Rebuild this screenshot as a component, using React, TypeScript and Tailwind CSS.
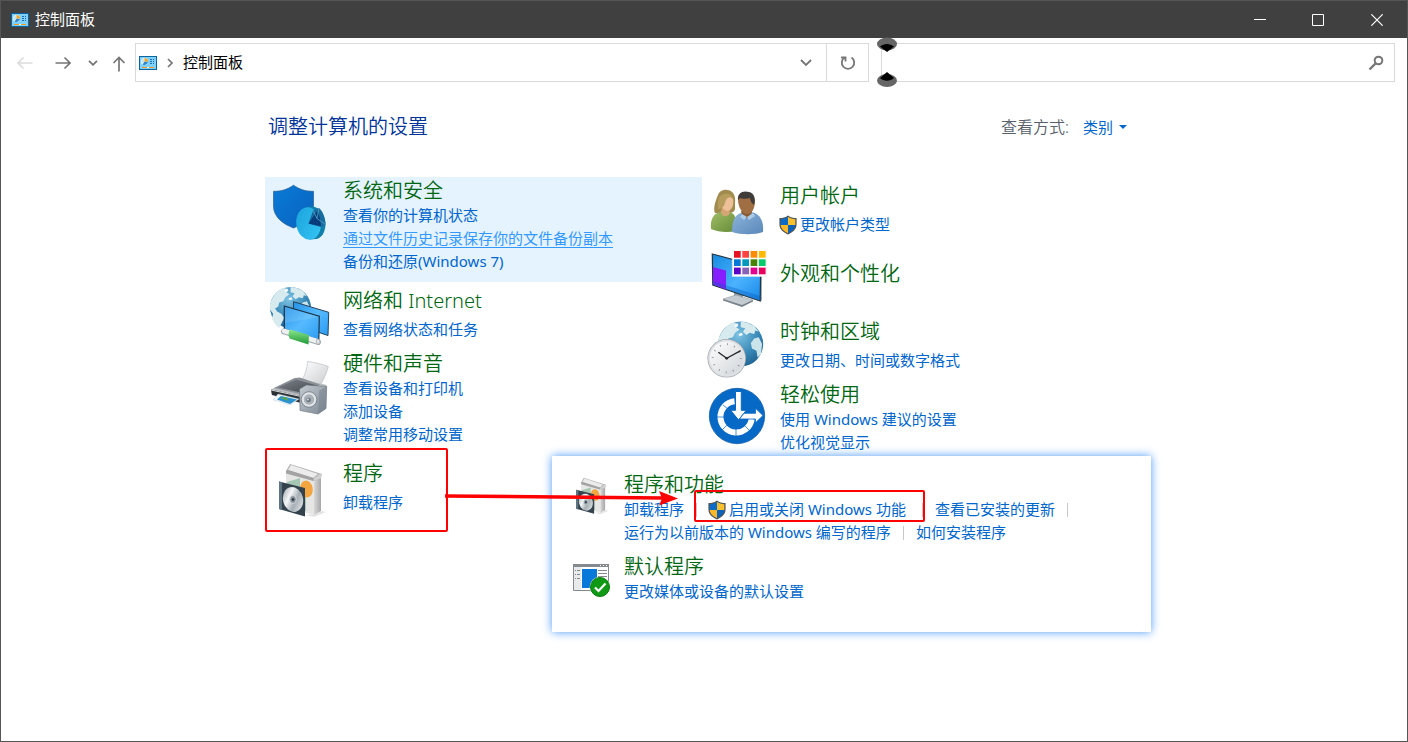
import type { ReactNode } from "react";

interface CategoryProps {
  icon: ReactNode;
  title: string;
  children?: ReactNode;
  className?: string;
  compact?: boolean;
  highlighted?: boolean;
}

interface TaskLinkProps {
  children: ReactNode;
  active?: boolean;
  shield?: boolean;
}

const swatches = [
  ["#e81123", "#ff4343", "#ff8c00", "#ffb900"],
  ["#0078d7", "#0099bc", "#498205", "#00cc6a"],
  ["#5a00c8", "#8764b8", "#e3008c", "#ea005e"],
];

function PanelIcon() {
  return (
    <svg viewBox="0 0 18 14" className="h-[14px] w-[18px] shrink-0">
      <rect width="18" height="14" fill="#0a64a0" />
      <rect x="1" y="1" width="16" height="12" fill="#7fd0fb" />
      <circle cx="5.5" cy="5.5" r="3.5" fill="#fff" />
      <path d="M5.5 5.5V2.400A3.100 3.100 0 0 0 3 7.500Z" fill="#bfe4fa" />
      <path d="M5.500 5.500H9A3.500 3.500 0 0 1 3.500 8.400Z" fill="#2c8ad4" />
      <path d="M5.500 5.500V2A3.500 3.500 0 0 1 9 5.500Z" fill="#f5a623" />
      <path
        d="M11 3h2v1h-2zM14 3h1v1h-1zM11 5h2v1h-2zM14 5h1v1h-1zM11 7h2v1h-2zM14 7h1v1h-1z"
        fill="#1b6fae"
      />
      <path d="M3 11h5v1H3zM10 11h5v1h-5z" fill="#f59a1c" />
      <path d="M8 11h2v1H8z" fill="#fff" />
    </svg>
  );
}

function UacShield() {
  return (
    <svg viewBox="0 0 18 20" className="mr-[3px] -ml-px h-5 w-[18px] shrink-0">
      <path d="M9 .5C6.5 2.4 3.8 3 .4 3v6.500c0 5 4.300 8 8.600 10 4.300-2 8.600-5 8.600-10V3C14.200 3 11.500 2.400 9 .5Z" fill="#50575d" />
      <path d="M9 2C7 3.300 4.800 4 1.700 4.200V10H9Z" fill="#0b6bc7" />
      <path d="M9 2c2 1.300 4.200 2 7.300 2.200V10H9Z" fill="#fbc02d" />
      <path d="M1.700 10c.3 4 3.800 6.500 7.300 8.200V10Z" fill="#fdb827" />
      <path d="M16.300 10c-.3 4-3.800 6.500-7.300 8.200V10Z" fill="#0b62b8" />
    </svg>
  );
}

function SecurityIcon() {
  return (
    <svg viewBox="0 0 64 64" className="size-16">
      <defs>
        <linearGradient id="shield" x1="0" y1="0" x2="1" y2="1">
          <stop offset="0" stopColor="#0a7ad8" />
          <stop offset="1" stopColor="#0862bd" />
        </linearGradient>
        <linearGradient id="pie" x1="0" y1="0" x2="1" y2="1">
          <stop offset="0" stopColor="#1ba3dc" />
          <stop offset="1" stopColor="#35c5f4" />
        </linearGradient>
      </defs>
      <path d="M26.500 4.200C21 8.300 14 10.500 6.500 10.300V25c0 11 9.500 18 20 22 10.500-4 20-11 20-22V10.300C39 10.500 32 8.300 26.500 4.200Z" fill="url(#shield)" stroke="#2c5d8c" strokeWidth=".7" />
      <path d="M38 26.500 45 25.500C53 26 58.500 34 58.500 43c0 8-4 14-9 15l-7 .5Z" fill="#127fab" />
      <ellipse cx="41.500" cy="42.500" rx="12.200" ry="16.300" transform="rotate(-9 41.500 42.500)" fill="url(#pie)" />
      <path d="M41.500 42.500 46 29.500l6-2.500c3.500 3 6 9 6.500 17l-5 2Z" fill="#176b9d" />
      <path d="m41.500 42.500 8.500-12.300c2.500 4 3.800 9 3.800 15Z" fill="#063c7c" />
      <path d="m46 29.500 4 8 8.500 6M50 37.500l2-10.500" fill="none" stroke="#54a7c9" strokeWidth=".8" />
    </svg>
  );
}

function Globe({ cx, cy, r }: { cx: number; cy: number; r: number }) {
  return (
    <g transform={`translate(${cx} ${cy}) scale(${r / 20})`}>
      <defs>
        <radialGradient id="ocean" cx=".45" cy=".3" r=".75">
          <stop offset="0" stopColor="#7cc2e3" />
          <stop offset=".6" stopColor="#3787b6" />
          <stop offset="1" stopColor="#1c5f8d" />
        </radialGradient>
      </defs>
      <circle r="20" fill="url(#ocean)" />
      <path d="M-18-8c2-5 6-9 11-11l5 1-2 3 3 2-4 3-2 4-4 1-1 4-3 2 2 3 4 2 3 4-2 4-3 6c-3-2-5-5-7-9l1-5-3-4c-.5-4 0-7 2-10Z" fill="#d7ebef" />
      <path d="m0-20 6 1 6 3 4 5-3-1-1 3-4-1-3 2-3-3 2-3-4-1Z" fill="#d7ebef" />
      <path d="m12-5 4-1 3 6-1 9-3 3-1-6-4-2-1-5Z" fill="#cbe4ea" />
      <path d="m-6-17 3-1 1 2-3 1ZM-2-9l3-1 1 2-3 1Z" fill="#f2fafa" />
    </g>
  );
}

function NetworkIcon() {
  return (
    <svg viewBox="0 0 64 64" className="size-16">
      <defs>
        <linearGradient id="net" x1="0" y1="0" x2="1" y2="1">
          <stop offset="0" stopColor="#2492e8" />
          <stop offset=".5" stopColor="#56baff" />
          <stop offset="1" stopColor="#2a9af2" />
        </linearGradient>
        <linearGradient id="cable" x1="0" y1="0" x2="0" y2="1">
          <stop offset="0" stopColor="#8be58b" />
          <stop offset="1" stopColor="#1f9a38" />
        </linearGradient>
      </defs>
      <Globe cx={23.5} cy={21.5} r={20.5} />
      <path d="m26.500 15.700 35.200 10.600L61 49.500 26.500 38Z" fill="url(#net)" stroke="#25435a" strokeWidth="1" />
      <path d="m17.300 20 35 10.200-.5 25L17.300 43Z" fill="url(#net)" stroke="#1d3548" strokeWidth="1.2" />
      <path d="m18 21 33.500 10L18 37Z" fill="#fff" opacity=".12" />
      <path d="m35 49 5 1.500-.5 4-5-1Z" fill="#bfc6cb" />
      <path d="m17 45.500 34 10.500" stroke="#9ea7ad" strokeWidth="6" strokeLinecap="round" />
      <path d="m17 45 34 10.500" stroke="#eef1f2" strokeWidth="4.5" strokeLinecap="round" />
      <path d="m23 43.500 19 5.500-.5 9.500-19-6c-1.500-3-1-7 .5-9Z" fill="url(#cable)" />
      <ellipse cx="51" cy="55.700" rx="1.8" ry="2.6" fill="#dfe3e5" stroke="#929a9f" strokeWidth=".6" />
    </svg>
  );
}

function HardwareIcon() {
  return (
    <svg viewBox="0 0 64 64" className="size-16">
      <defs>
        <linearGradient id="paper" x1="0" y1="0" x2="1" y2="1">
          <stop offset="0" stopColor="#fff" />
          <stop offset="1" stopColor="#c9cccf" />
        </linearGradient>
        <linearGradient id="printer" x1="0" y1="0" x2="1" y2="1">
          <stop offset="0" stopColor="#7d8388" />
          <stop offset="1" stopColor="#42484d" />
        </linearGradient>
        <linearGradient id="speaker" x1="0" y1="0" x2="1" y2="1">
          <stop offset="0" stopColor="#c4cad1" />
          <stop offset="1" stopColor="#7d8893" />
        </linearGradient>
      </defs>
      <path d="M40.700 6.500c7 1 14 2.500 20.600 5-2 8-5 13-8 19L35 25c3-5 5-11 5.700-18.500Z" fill="url(#paper)" stroke="#b4b7ba" strokeWidth=".6" />
      <path d="m4 34.500 24-11.800L59.700 30 58 36l-25 9L4.500 39Z" fill="#b9bdc0" />
      <path d="m7 33 21-10 5-.5 20 7-18 10Z" fill="#8b9196" />
      <path d="m11 32.500 18-8 21 6-16 7Z" fill="url(#printer)" />
      <path d="m4 34.500 30 6.500v7L5 40Z" fill="#2b3135" />
      <path d="m4 34.500 30 6.500v1L4 35.500Z" fill="#d9dcde" />
      <path d="m11 39 21 5-9 6c-5-1-10-4-17-5Z" fill="#f1f6f8" stroke="#aebdc5" strokeWidth=".4" />
      <path d="m14 41 16 3.500-7 4.500c-4-1-8-3-13-4.500Z" fill="#2b91cf" />
      <path d="m13 43 6-1 3 4Z" fill="#59a84b" />
      <path d="m32.500 34 7-4 20.200 1.500L59 53.500 51 59l-18-3.500Z" fill="url(#speaker)" stroke="#68727b" strokeWidth=".6" />
      <path d="m52 36 7.500-4.500L59 53.500 51 59Z" fill="#75808a" opacity=".5" />
      <circle cx="42" cy="44.500" r="7.800" fill="#dce0e4" stroke="#6e7881" strokeWidth=".8" />
      <circle cx="42" cy="44.500" r="5.700" fill="#aab2b9" stroke="#f2f4f5" strokeWidth=".8" />
      <circle cx="41.500" cy="45" r="2.300" fill="#6a747d" />
      <circle cx="41" cy="44.500" r=".9" fill="#e6e9eb" />
    </svg>
  );
}

function ProgramsIcon({ className }: { className: string }) {
  return (
    <svg viewBox="0 0 64 64" className={className}>
      <defs>
        <linearGradient id="boxSide" x1="0" y1="0" x2="1" y2="0">
          <stop offset="0" stopColor="#d8d8d8" />
          <stop offset="1" stopColor="#a7a7a7" />
        </linearGradient>
        <linearGradient id="disc" x1="0" y1="0" x2="1" y2="1">
          <stop offset="0" stopColor="#8f989e" />
          <stop offset=".35" stopColor="#f4f6f7" />
          <stop offset=".6" stopColor="#a6afb5" />
          <stop offset="1" stopColor="#f1f3f4" />
        </linearGradient>
      </defs>
      <path d="m38 55 9-1 8-3 4 1-12 5Z" fill="#000" opacity=".1" />
      <path d="m19 11 28 8v36l-28-8Z" fill="#e6e6e5" />
      <path d="m47 19 7-3v35l-7 4Z" fill="url(#boxSide)" />
      <path d="m19 11 4-7 32 10-1 4-7 3Z" fill="#b5b5b5" />
      <path d="m21 10 3-5 27 9-5 4Z" fill="#ececec" />
      <path d="m19 11 2-1 25.500 8v3L19 13.500Z" fill="#a3a3a3" />
      <path d="M47 18c3-1 5-3 7-5l1 2-1 3-7 3Z" fill="#d2d2d2" />
      <path d="m20 22 13-4v20H20Z" fill="#a6c7b4" />
      <path d="m33 35 6 1v15h-6Z" fill="#a9c7b8" />
      <ellipse cx="39.500" cy="29" rx="6.200" ry="8.500" transform="rotate(-10 39.500 29)" fill="#f3a63f" />
      <path d="m12 21.500 26 6.500v28.500L12 49Z" fill="#34424e" />
      <path d="m12 21.500 3 .8V50l-3-1Z" fill="#5e7481" />
      <ellipse cx="26" cy="39.500" rx="10" ry="12.500" transform="rotate(-14 26 39.500)" fill="url(#disc)" />
      <ellipse cx="26" cy="39.500" rx="3.300" ry="4" fill="#87929a" stroke="#e9edef" strokeWidth=".7" />
      <circle cx="26" cy="39.500" r="1.300" fill="#27333d" />
    </svg>
  );
}

function AccountsIcon() {
  return (
    <svg viewBox="0 0 64 64" className="size-16">
      <defs>
        <linearGradient id="green" x1="0" y1="0" x2="1" y2="1">
          <stop offset="0" stopColor="#a1bd65" />
          <stop offset="1" stopColor="#658b39" />
        </linearGradient>
        <linearGradient id="blue" x1="0" y1="0" x2="1" y2="1">
          <stop offset="0" stopColor="#8db4da" />
          <stop offset="1" stopColor="#5a88bb" />
        </linearGradient>
      </defs>
      <path d="M14 14c2-6 11-7 15-2 3 4 2 9 2 13 1 6-3 7-6 7H11c-2-4 0-11 3-18Z" fill="#a28b4f" />
      <path d="M7 48c-1-9 2-16 10-17h8c5 1 7 5 7 10v9c-9 2-18 1-25-2Z" fill="url(#green)" />
      <path d="M17 31c1 5 6 6 9 1l-2-6h-6Z" fill="#d5a575" />
      <path d="M20 15c3-1 7 0 9 3 1 6-1 11-5 12-4 0-7-4-6-9Z" fill="#edc099" />
      <path d="M14 22c0-10 11-12 15-5-4-2-7 0-8 5-1 4-4 6-7 6Z" fill="#b79d5d" />
      <path d="M28 51c0-10 2-17 9-19l11-1c8 2 12 9 11 20-8 3-22 3-31 0Z" fill="url(#blue)" />
      <path d="M37 30h11l-1 5c-3 3-7 3-9-1Z" fill="#885a35" />
      <path d="M34 18c0-6 17-6 17 2 0 7-3 13-8 13s-9-7-9-15Z" fill="#a06e43" />
      <path d="M34 19c-1-7 5-10 11-8 5 1 7 6 5 13l-3-3-1-4c-4 1-8 1-10 0Z" fill="#3e3b39" />
      <path d="m38 33 5 3 6-4 2 3-6 4-2-3-3 3-4-3Z" fill="#abcbe9" />
    </svg>
  );
}

function AppearanceIcon() {
  return (
    <svg viewBox="0 0 64 64" className="size-16">
      <defs>
        <linearGradient id="screen" x1="0" y1="0" x2="1" y2="1">
          <stop offset="0" stopColor="#168be0" />
          <stop offset=".55" stopColor="#4bb2ff" />
          <stop offset="1" stopColor="#1788e6" />
        </linearGradient>
      </defs>
      <path d="m30 41 9 3v7l-9-2Z" fill="#929ea8" />
      <path d="m19 49 13-4 17 5-11 6Z" fill="#c4ccd2" stroke="#87929a" strokeWidth=".5" />
      <path d="m19 49 19 6 11-5v1.500L38 57l-19-6.500Z" fill="#77828b" />
      <path d="m56.500 17 1.500.5v33l-2 1Z" fill="#a1abb2" />
      <path d="m8.300 4 48.400 13-.5 34L8.800 35Z" fill="url(#screen)" stroke="#213645" strokeWidth="1.2" />
      <path d="m9 17 13 3.500v19L9 34.500Z" fill="#861ffd" />
      <path d="m9 31 47 15v4L9 34.500Z" fill="#0755bd" opacity=".35" />
      <path d="M28.300 0h34.300v26.500H28.300Z" fill="#fff" stroke="#e4e7e9" strokeWidth=".5" />
      {swatches.map((row, y) =>
        row.map((color, x) => (
          <rect key={color} x={30 + x * 8.3} y={1 + y * 8.3} width="6.700" height="6.700" fill={color} />
        ))
      )}
    </svg>
  );
}

function ClockIcon() {
  return (
    <svg viewBox="0 0 64 64" className="size-16">
      <defs>
        <linearGradient id="clock" x1="0" y1="0" x2="1" y2="1">
          <stop offset="0" stopColor="#fff" />
          <stop offset="1" stopColor="#d0d4d8" />
        </linearGradient>
      </defs>
      <Globe cx={36.7} cy={27} r={22.5} />
      <circle cx="22.700" cy="41.300" r="19.300" fill="#a6abb0" />
      <circle cx="22.700" cy="41.300" r="18.500" fill="#dfe2e5" />
      <circle cx="22.700" cy="41.300" r="16.700" fill="url(#clock)" />
      <circle cx="22.700" cy="41.300" r="14" fill="none" stroke="#858b91" strokeWidth="2" strokeDasharray=".8 6.530" />
      <path d="m14.300 35.300 8.400 6 14-7.600" fill="none" stroke="#25292d" strokeWidth="1.4" />
      <circle cx="22.700" cy="41.300" r="1.400" fill="#25292d" />
    </svg>
  );
}

function EaseIcon() {
  return (
    <svg viewBox="0 0 64 64" className="size-16">
      <circle cx="33" cy="30" r="27.700" fill="#0769c6" stroke="#0755a0" strokeWidth=".7" />
      <path d="M30.500 15.200A15.700 15.700 0 1 0 47.700 33" fill="none" stroke="#fff" strokeWidth="6" />
      <path d="m19 19 5 4M13 31h7M18 44l5-5M32 43v7M41 40l5 5" stroke="#0769c6" strokeWidth=".7" />
      <path d="M31.500 5.500h5.800v18.800h5L34.500 34l-7.800-9.700h4.800Z" fill="#fff" stroke="#0769c6" strokeWidth="1" />
      <path d="m35.500 33 4.500-5.700h11.500v-5l7.500 7.200-7.500 7.200V33Z" fill="#fff" stroke="#0769c6" strokeWidth=".8" />
    </svg>
  );
}

function DefaultsIcon() {
  return (
    <svg viewBox="0 0 44 44" className="size-11">
      <path d="M5.500 7.500h35v26h-35Z" fill="#fff" stroke="#858a8e" />
      <path d="M5 7h36v3H5Z" fill="#858a8e" />
      <path d="M32 8h1v1h-1zM35 8h1v1h-1zM38 8h1v1h-1z" fill="#fff" />
      <path d="M6 10h7v23H6Z" fill="#e9eaeb" />
      <path d="M7 13.500h1m1 0h3M7 17.500h1m1 0h3M7 21.500h1m1 0h3M30 13.500h9M30 16.500h9M30 19.500h9" stroke="#85898c" />
      <path d="M14 12h15v19H14Z" fill="#0878d9" />
      <circle cx="32" cy="30" r="10.300" fill="#fff" />
      <circle cx="32" cy="30" r="9.500" fill="#109915" stroke="#087b0d" />
      <path d="m27 30.500 3.500 3.500 7-7.500" fill="none" stroke="#fff" strokeWidth="2.2" />
    </svg>
  );
}

function TaskLink({ children, active, shield }: TaskLinkProps) {
  return (
    <a
      href="#"
      className={`inline-flex h-[23px] items-center hover:underline ${
        active ? "text-[#3399ff] underline underline-offset-3" : "text-[#0066cc]"
      } ${shield ? "pr-1" : ""}`}
    >
      {shield && <UacShield />}
      {children}
    </a>
  );
}

function CategoryTitle({ children }: { children: ReactNode }) {
  return (
    <h2 className="text-xl leading-[26px] font-[350] text-[#006611]">
      <a href="#">{children}</a>
    </h2>
  );
}

function Category({
  icon,
  title,
  children,
  className = "",
  compact,
  highlighted,
}: CategoryProps) {
  return (
    <section className={`flex gap-3 pl-[2px] ${highlighted ? "bg-[#e5f3ff]" : ""}`}>
      <div className="mt-1 h-0 w-16 shrink-0">{icon}</div>
      <div className={className}>
        <CategoryTitle>{title}</CategoryTitle>
        <div className={`flex flex-col items-start ${compact ? "" : "pt-1"}`}>
          {children}
        </div>
      </div>
    </section>
  );
}

function Separator() {
  return <span className="mx-3 h-[14px] w-px shrink-0 bg-[#c8c8c8]" />;
}

function TitleBar() {
  return (
    <header className="flex h-[37px] items-center bg-[#404040] pl-[10px] text-white">
      <PanelIcon />
      <h1 className="ml-[6px] flex-1">控制面板</h1>
      <button aria-label="最小化" className="flex h-full w-[58px] items-center justify-center">
        <svg viewBox="0 0 12 12" className="size-3" fill="none" stroke="currentColor">
          <path d="M0 5.500h12" />
        </svg>
      </button>
      <button aria-label="最大化" className="flex h-full w-[58px] items-center justify-center">
        <svg viewBox="0 0 12 12" className="size-3" fill="none" stroke="currentColor">
          <path d="M.5.500h11v11H.5Z" />
        </svg>
      </button>
      <button aria-label="关闭" className="flex h-full w-[60px] items-center justify-center">
        <svg viewBox="0 0 12 12" className="size-3" fill="none" stroke="currentColor" strokeWidth="1.2">
          <path d="m.3.300 11.400 11.400M11.700.300.3 11.700" />
        </svg>
      </button>
    </header>
  );
}

function Toolbar() {
  return (
    <div className="flex items-center pt-[5px] pr-3 pl-4 text-[#767676]">
      <nav className="flex w-[118px] shrink-0 items-center">
        <button aria-label="后退" className="text-[#dcdcdc]">
          <svg viewBox="0 0 16 14" className="h-[14px] w-4" fill="none" stroke="currentColor" strokeWidth="1.6">
            <path d="M15.500 7H1M6.500 1.500 1 7l5.500 5.500" />
          </svg>
        </button>
        <button aria-label="前进" className="ml-[22px]">
          <svg viewBox="0 0 16 14" className="h-[14px] w-4" fill="none" stroke="currentColor" strokeWidth="1.6">
            <path d="M.5 7H15M9.500 1.500 15 7l-5.500 5.500" />
          </svg>
        </button>
        <button aria-label="最近位置" className="ml-[17px]">
          <svg viewBox="0 0 10 6" className="h-[6px] w-[10px]" fill="none" stroke="currentColor" strokeWidth="1.8">
            <path d="m1 .8 4 4 4-4" />
          </svg>
        </button>
        <button aria-label="上移" className="ml-[14px] pt-[2px]">
          <svg viewBox="0 0 14 16" className="h-4 w-[14px]" fill="none" stroke="currentColor" strokeWidth="1.7">
            <path d="M7 15.500V1.500M1.500 7 7 1.500 12.500 7" />
          </svg>
        </button>
      </nav>
      <div className="flex h-[39px] flex-1 items-center border border-[#d9d9d9] pl-[3px]">
        <PanelIcon />
        <svg viewBox="0 0 6 10" className="ml-[10px] h-[10px] w-[6px]" fill="none" stroke="currentColor" strokeWidth="1.7">
          <path d="m1 1 4 4-4 4" />
        </svg>
        <span className="ml-[10px] flex-1 text-black">控制面板</span>
        <button aria-label="以前的位置" className="flex h-full w-10 items-center justify-center">
          <svg viewBox="0 0 12 8" className="h-2 w-3" fill="none" stroke="currentColor" strokeWidth="1.8">
            <path d="m1 1 5 5 5-5" />
          </svg>
        </button>
        <button aria-label="刷新" className="flex h-full w-[42px] items-center justify-center border-l border-[#d9d9d9]">
          <svg viewBox="0 0 16 16" className="size-4" fill="none" stroke="currentColor" strokeWidth="1.8">
            <path d="M11.500 2.500a6.200 6.200 0 1 1-7 0M1 2.300h4.500v4.300" />
          </svg>
        </button>
      </div>
      <div className="relative ml-3 flex h-[39px] w-[514px] items-center border border-[#d9d9d9] pr-[10px]">
        <input type="search" aria-label="搜索控制面板" className="h-full min-w-0 flex-1 px-3 text-black outline-none" />
        <svg viewBox="0 0 16 16" className="size-4" fill="none" stroke="currentColor" strokeWidth="2">
          <circle cx="10.500" cy="5.500" r="3.800" />
          <path d="M7.500 8.500 1.500 14.500" strokeWidth="2.4" />
        </svg>
        <svg viewBox="0 0 20 50" className="absolute -top-[7px] -left-[5px] h-[50px] w-5">
          <ellipse cx="10" cy="7" rx="10" ry="6.500" fill="#666" />
          <path d="M3 9.500c4-3.500 10-3.500 14 0L10 15Z" fill="#000" />
          <ellipse cx="10" cy="43.500" rx="10" ry="6.500" fill="#666" />
          <path d="M3 41c4 3.500 10 3.500 14 0l-7-6Z" fill="#000" />
        </svg>
      </div>
    </div>
  );
}

function ProgramsPopup() {
  return (
    <div className="absolute top-[279px] left-[287px] w-[599px] bg-white pt-4 pb-[29px] pl-4 shadow-[0_0_9px_#4a98f7]">
      <section className="flex gap-3">
        <div className="mt-[3px] h-0 w-11 shrink-0">
          <ProgramsIcon className="size-11" />
        </div>
        <div>
          <CategoryTitle>程序和功能</CategoryTitle>
          <div className="flex items-center">
            <TaskLink>卸载程序</TaskLink>
            <Separator />
            <TaskLink shield>启用或关闭 Windows 功能</TaskLink>
            <Separator />
            <TaskLink>查看已安装的更新</TaskLink>
            <Separator />
          </div>
          <div className="flex items-center">
            <TaskLink>运行为以前版本的 Windows 编写的程序</TaskLink>
            <Separator />
            <TaskLink>如何安装程序</TaskLink>
          </div>
        </div>
      </section>
      <section className="mt-[10px] flex gap-3">
        <div className="mt-[3px] h-0 w-11 shrink-0">
          <DefaultsIcon />
        </div>
        <div>
          <CategoryTitle>默认程序</CategoryTitle>
          <TaskLink>更改媒体或设备的默认设置</TaskLink>
        </div>
      </section>
    </div>
  );
}

function Annotations() {
  return (
    <div className="pointer-events-none">
      <div className="absolute top-[271px] left-0 h-[84px] w-[183px] rounded-xs border-2 border-[#ff0000]" />
      <div className="absolute top-[313px] left-[429px] h-[32px] w-[231px] rounded-xs border-2 border-[#ff0000]" />
      <svg viewBox="0 0 236 20" className="absolute top-[310px] left-[180px] h-5 w-[236px]">
        <path d="m0 9 218 2" stroke="#f00" strokeWidth="3.5" />
        <path d="M214 4 233 11.500l-19 7 3-7Z" fill="#f00" />
      </svg>
    </div>
  );
}

export default function App() {
  return (
    <div className="flex min-h-screen flex-col border border-[#555] bg-white font-['Noto_Sans','Noto_Sans_CJK_SC',sans-serif] text-[15px] leading-[23px]">
      <TitleBar />
      <Toolbar />
      <main className="mx-auto w-full max-w-[878px] flex-1 pt-8">
        <div className="flex items-center justify-between pr-4 pl-[3px]">
          <h2 className="text-xl leading-[26px] font-[350] text-[#003399]">调整计算机的设置</h2>
          <div className="flex items-center">
            <label htmlFor="view" className="text-base font-[350] text-[#57606a]">
              查看方式:
            </label>
            <select id="view" className="ml-[14px] w-[30px] appearance-none text-[#0066cc] outline-none">
              <option>类别</option>
            </select>
            <svg viewBox="0 0 8 4" className="ml-[6px] h-1 w-2" fill="#0066cc">
              <path d="M0 0h8L4 4Z" />
            </svg>
          </div>
        </div>
        <div className="relative mt-[37px] flex">
          <div className="w-[437px]">
            <Category compact highlighted icon={<SecurityIcon />} title="系统和安全" className="pt-px pb-[9px]">
              <TaskLink>查看你的计算机状态</TaskLink>
              <TaskLink active>通过文件历史记录保存你的文件备份副本</TaskLink>
              <TaskLink>备份和还原(Windows 7)</TaskLink>
            </Category>
            <Category icon={<NetworkIcon />} title="网络和 Internet" className="pt-[6px] pb-[10px]">
              <TaskLink>查看网络状态和任务</TaskLink>
            </Category>
            <Category compact icon={<HardwareIcon />} title="硬件和声音" className="pb-[10px]">
              <TaskLink>查看设备和打印机</TaskLink>
              <TaskLink>添加设备</TaskLink>
              <TaskLink>调整常用移动设置</TaskLink>
            </Category>
            <Category icon={<ProgramsIcon className="size-16" />} title="程序" className="pt-[5px] pb-[11px]">
              <TaskLink>卸载程序</TaskLink>
            </Category>
          </div>
          <div className="w-[437px]">
            <Category icon={<AccountsIcon />} title="用户帐户" className="pt-[6px] pb-[10px]">
              <TaskLink shield>更改帐户类型</TaskLink>
            </Category>
            <Category compact icon={<AppearanceIcon />} title="外观和个性化" className="pt-[15px] pb-[26px]" />
            <Category icon={<ClockIcon />} title="时钟和区域" className="pt-[6px] pb-[10px]">
              <TaskLink>更改日期、时间或数字格式</TaskLink>
            </Category>
            <Category compact icon={<EaseIcon />} title="轻松使用">
              <TaskLink>使用 Windows 建议的设置</TaskLink>
              <TaskLink>优化视觉显示</TaskLink>
            </Category>
          </div>
          <ProgramsPopup />
          <Annotations />
        </div>
      </main>
    </div>
  );
}
